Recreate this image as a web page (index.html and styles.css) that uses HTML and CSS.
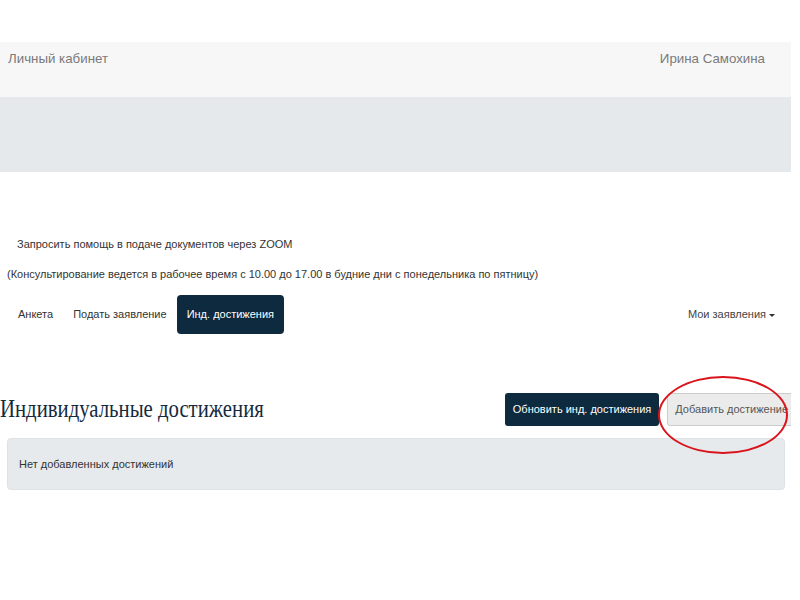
FILE: index.html
```html
<!DOCTYPE html>
<html lang="ru">
<head>
  <meta charset="UTF-8">
  <title>Личный кабинет</title>
  <link rel="stylesheet" href="styles.css">
</head>
<body>
  <div class="page">
    <div class="topbar">
      <span class="brand">Личный кабинет</span>
      <span class="user">Ирина Самохина</span>
    </div>
    <div class="band"></div>

    <div class="help">
      <a class="help-link" href="#">Запросить помощь в подаче документов через ZOOM</a>
      <p class="help-note">(Консультирование ведется в рабочее время с 10.00 до 17.00 в будние дни с понедельника по пятницу)</p>
    </div>

    <div class="tabs">
      <a class="tab" href="#">Анкета</a>
      <a class="tab" href="#">Подать заявление</a>
      <a class="tab active" href="#">Инд. достижения</a>
      <a class="tab dropdown" href="#">Мои заявления<span class="caret"></span></a>
    </div>

    <div class="section-head">
      <h1>Индивидуальные достижения</h1>
      <div class="actions">
        <button class="btn btn-dark">Обновить инд. достижения</button>
        <span class="marked">
          <button class="btn btn-light">Добавить достижение</button>
          <span class="mark"></span>
        </span>
      </div>
    </div>

    <div class="alert">Нет добавленных достижений</div>
  </div>
</body>
</html>
```

FILE: styles.css
```css
body {
  margin: 0;
  padding-top: 42px;
  background: #fff;
  font-family: "Liberation Sans", Arial, sans-serif;
  color: #333;
}
.page {
  width: 791px;
  overflow: hidden;
}
a { text-decoration: none; }

.topbar {
  height: 55px;
  background: #f7f7f7;
  display: flex;
  justify-content: space-between;
  padding: 9px 26px 0 8px;
  box-sizing: border-box;
  font-size: 13.3px;
  color: #7a7a7a;
}
.band {
  height: 75px;
  background: #e5e9ec;
}

.help {
  padding-top: 66px;
  font-size: 11px;
}
.help-link {
  display: block;
  color: #333;
  margin-left: 17px;
}
.help-note {
  margin: 18px 0 0 7px;
}

.tabs {
  display: flex;
  align-items: center;
  margin-top: 15px;
  padding-left: 8px;
  font-size: 11px;
}
.tab {
  color: #333;
  padding: 13px 10px 13.5px;
  border-radius: 4px;
}
.tab.active {
  background: #0d2a3e;
  color: #fff;
}
.tab.dropdown {
  margin-left: auto;
  margin-right: 6px;
  color: #444;
}
.caret {
  display: inline-block;
  margin-left: 3px;
  vertical-align: middle;
  border-top: 3px solid #333;
  border-left: 3px solid transparent;
  border-right: 3px solid transparent;
}

.section-head {
  display: flex;
  align-items: center;
  justify-content: space-between;
  margin-top: 59px;
}
h1 {
  margin: 0;
  font-family: "Liberation Serif", serif;
  font-weight: normal;
  font-size: 25px;
  color: #132a3e;
  transform: scaleX(0.83);
  transform-origin: left center;
  white-space: nowrap;
}
.actions {
  display: flex;
  gap: 8px;
  margin-right: -5px;
}
.btn {
  font-family: inherit;
  font-size: 11px;
  height: 33px;
  padding: 0 7px;
  border-radius: 3px;
  border: 1px solid transparent;
}
.btn-dark {
  background: #0d2a3e;
  color: #fff;
}
.btn-light {
  background: #ebebeb;
  border-color: #ccc;
  color: #555;
}
.marked {
  position: relative;
}
.mark {
  position: absolute;
  left: -9px;
  top: -17px;
  width: 126px;
  height: 74px;
  border: 2px solid #d9141c;
  border-radius: 50%;
}

.alert {
  margin: 12px 6px 0 7px;
  height: 50px;
  display: flex;
  align-items: center;
  padding-left: 11px;
  background: #e6eaed;
  border: 1px solid #dde2e6;
  border-radius: 4px;
  font-size: 11px;
  color: #333;
}
```
